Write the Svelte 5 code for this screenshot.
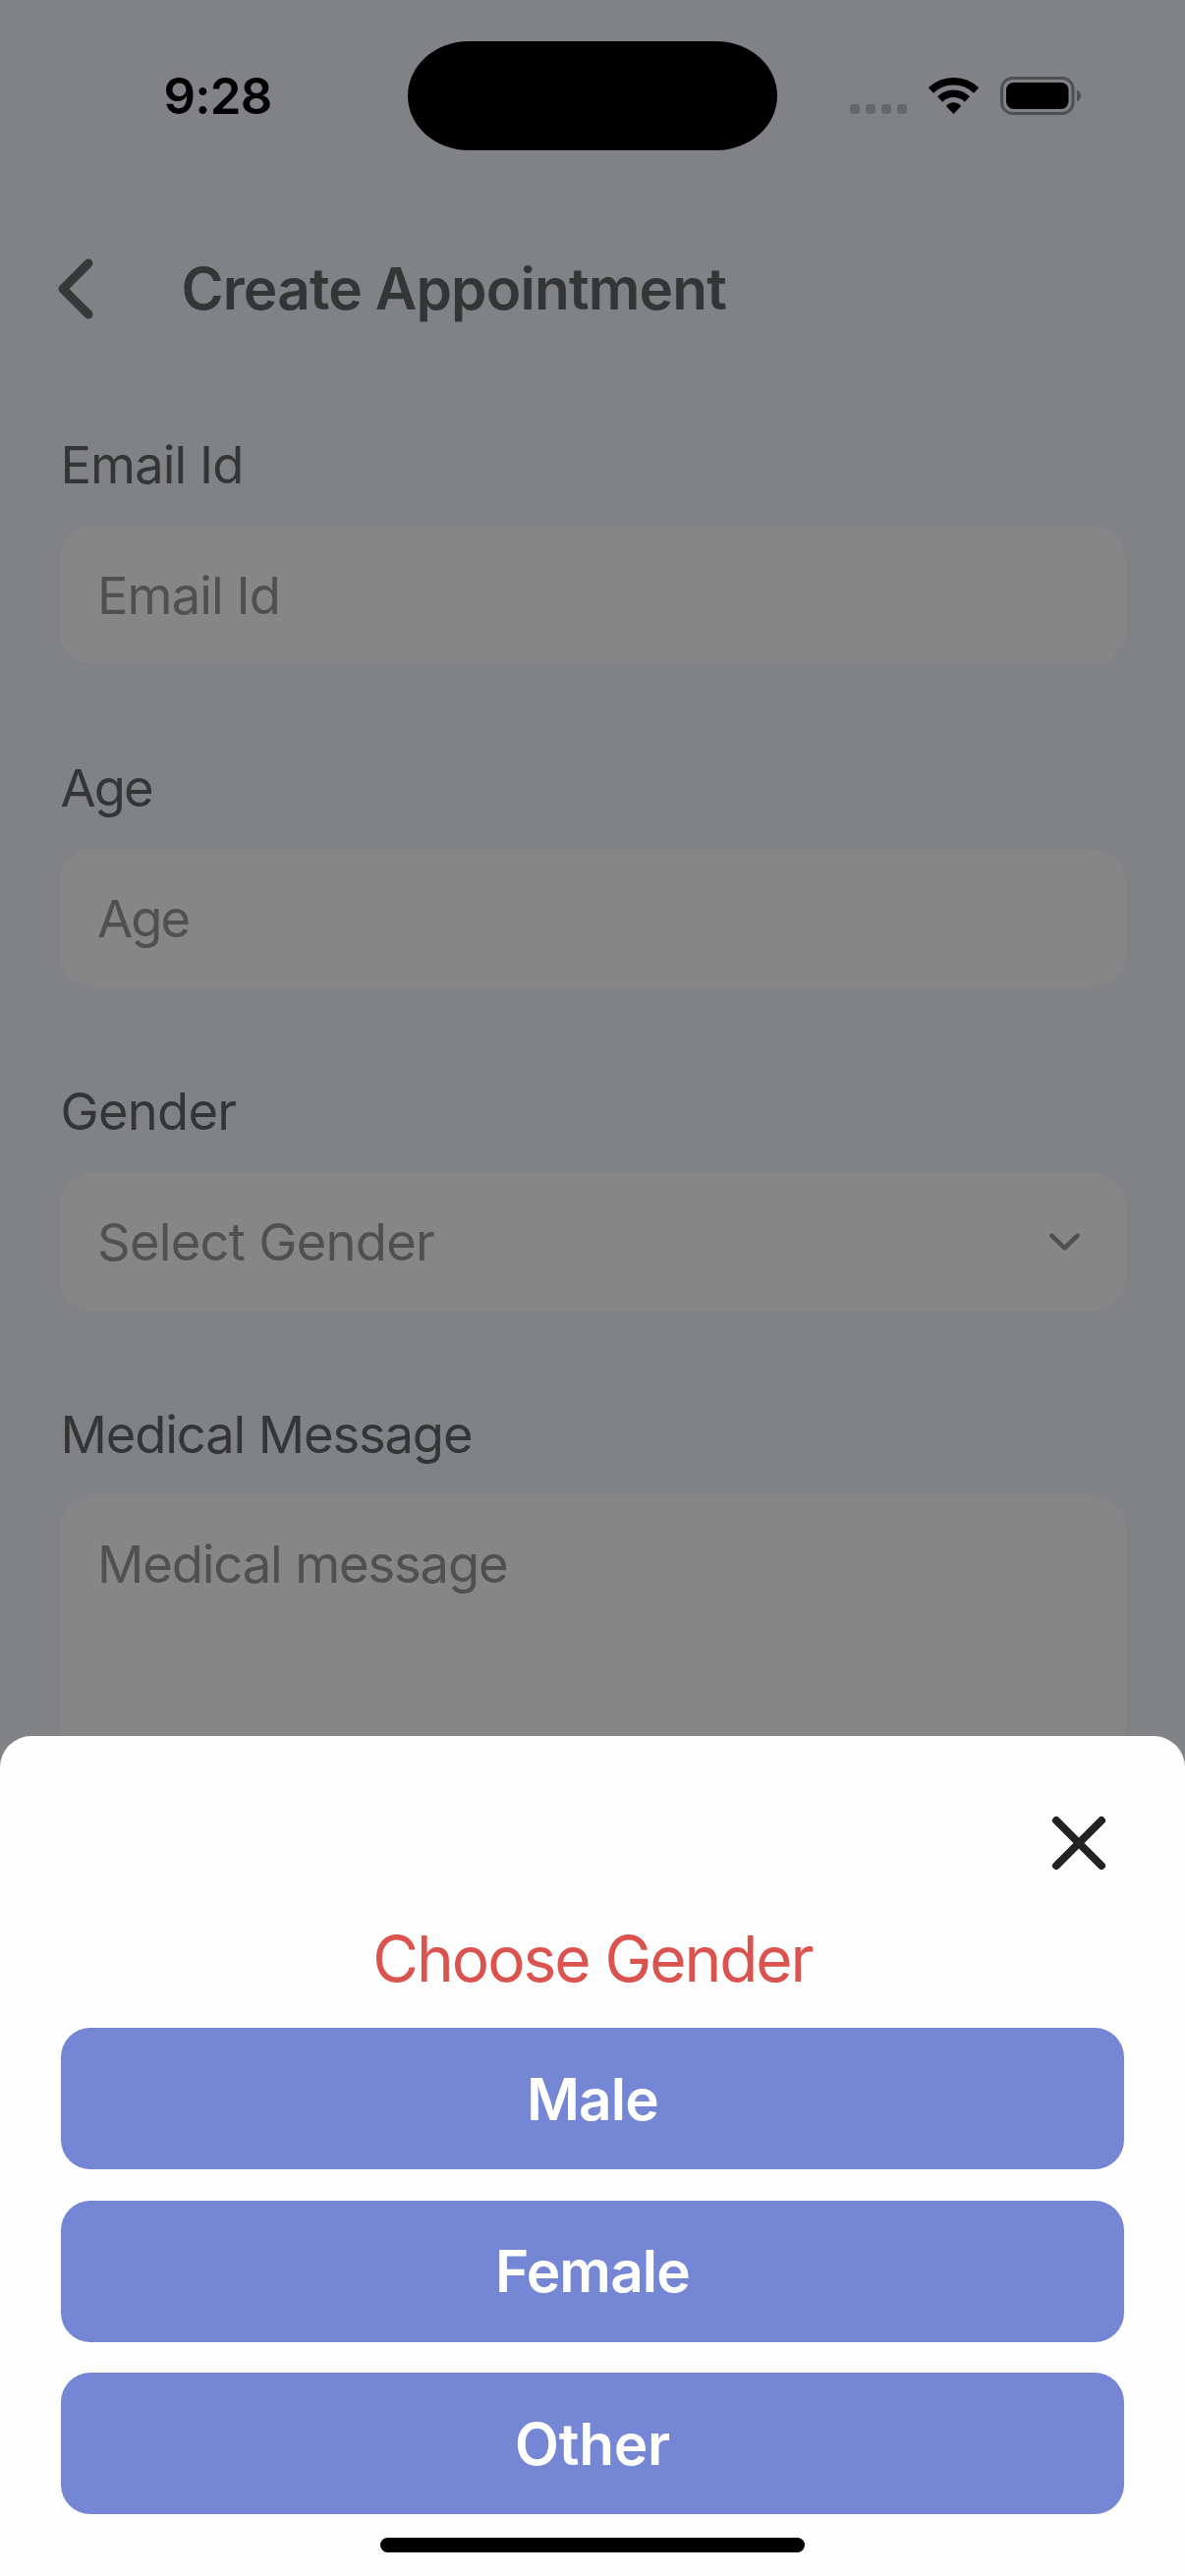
<script>
  const fields = [
    { label: 'Email Id', placeholder: 'Email Id', kind: 'input', key: 'email' },
    { label: 'Age', placeholder: 'Age', kind: 'input', key: 'age' },
    { label: 'Gender', placeholder: 'Select Gender', kind: 'select', key: 'gender' },
    { label: 'Medical Message', placeholder: 'Medical message', kind: 'area', key: 'message' }
  ];
  const options = ['Male', 'Female', 'Other'];
</script>

<div class="phone">
  <div class="status">
    <span class="time">9:28</span>
    <span class="island"></span>
    <svg class="indicators" viewBox="865 78 236 39" aria-hidden="true">
      <g fill="#66676a">
        <rect x="865" y="106" width="10" height="10" rx="3" />
        <rect x="881" y="106" width="10" height="10" rx="3" />
        <rect x="897" y="106" width="10" height="10" rx="3" />
        <rect x="913" y="106" width="10" height="10" rx="3" />
      </g>
      <g fill="none" stroke="#000" stroke-width="7.4">
        <path d="M947.4 92A33.3 33.3 0 0 1 993.6 92" />
        <path d="M956.6 101A19.8 19.8 0 0 1 984.4 101" />
      </g>
      <path d="M970.5 116L963 108.2Q963.2 107 964.4 106.2A11 11 0 0 1 976.6 106.2Q977.8 107 978 108.2Z" />
      <rect x="1019.5" y="79.5" width="72.5" height="36" rx="11" fill="none" stroke="#4f5052" stroke-width="3" />
      <rect x="1024" y="84" width="63.5" height="27" rx="7.5" />
      <path d="M1096 91.5Q1100 93.500 1100 97.500Q1100 101.500 1096 103.500Z" fill="#4f5052" />
    </svg>
  </div>

  <header class="header">
    <svg class="back" viewBox="0 0 36 62" aria-hidden="true">
      <path d="M31 5L5 31L31 57" />
    </svg>
    <h1>Create Appointment</h1>
  </header>

  <main class="form">
    {#each fields as f}
      <section class="group">
        <span class="label {f.key}">{f.label}</span>
        <div class="field {f.kind}">
          <span class="hint {f.key}">{f.placeholder}</span>
          {#if f.kind === 'select'}
            <svg class="caret" viewBox="0 0 32 18" aria-hidden="true">
              <path d="M2.500 2.500L16 15.500L29.500 2.500" />
            </svg>
          {/if}
        </div>
      </section>
    {/each}
  </main>

  <div class="sheet">
    <svg class="close" viewBox="0 0 56 56" aria-hidden="true">
      <path d="M5 5L51 51M51 5L5 51" />
    </svg>
    <h2>Choose Gender</h2>
    <div class="options">
      {#each options as o}
        <button class="option">{o}</button>
      {/each}
    </div>
    <span class="home"></span>
  </div>
</div>

<style>
  :global(body) {
    margin: 0;
    background: #818286;
  }
  .phone {
    position: relative;
    width: 1206px;
    height: 2622px;
    overflow: hidden;
    background: #818286;
    font-family: Inter, 'Liberation Sans', sans-serif;
    color: #343535;
  }
  .status {
    display: grid;
    grid-template-columns: 415px 376px 74px 236px;
    align-items: center;
    height: 195px;
  }
  .time {
    padding-left: 166.5px;
    font-size: 51px;
    line-height: 60px;
    font-weight: 600;
    letter-spacing: -0.8px;
    color: #000;
  }
  .island {
    height: 111px;
    margin-bottom: 1px;
    border-radius: 62px / 55.5px;
    background: #000;
  }
  .indicators {
    grid-column: 4;
    width: 236px;
    height: 39px;
  }
  .header {
    display: flex;
    align-items: center;
    height: 198px;
    padding-left: 58.5px;
  }
  .back {
    width: 36px;
    height: 62px;
    margin-right: 90px;
    fill: none;
    stroke: #373838;
    stroke-width: 9;
    stroke-linecap: round;
    stroke-linejoin: round;
  }
  h1 {
    margin: 0;
    font-size: 58.5px;
    line-height: 70px;
    font-weight: 600;
    letter-spacing: -0.85px;
  }
  .form {
    display: flex;
    flex-direction: column;
    gap: 94px;
    padding: 48px 61px 0;
  }
  .group {
    display: flex;
    flex-direction: column;
    gap: 31px;
  }
  .label,
  .hint {
    font-size: 52.5px;
    line-height: 64px;
    white-space: nowrap;
  }
  .label {
    align-self: flex-start;
    padding-left: 0.5px;
  }
  .email {
    letter-spacing: -0.95px;
  }
  .age {
    letter-spacing: -1.9px;
  }
  .gender {
    letter-spacing: -0.75px;
  }
  .message {
    letter-spacing: -1.15px;
  }
  .field {
    display: flex;
    align-items: center;
    justify-content: space-between;
    box-sizing: border-box;
    height: 140px;
    padding: 0 46px 1px 38px;
    border-radius: 32px;
    background: #868686;
    color: #515051;
  }
  .area {
    align-items: flex-start;
    height: 440px;
    padding-top: 37px;
  }
  .caret {
    width: 31px;
    height: 18px;
    fill: none;
    stroke: #4e4e4e;
    stroke-width: 4.6;
    stroke-linecap: round;
    stroke-linejoin: round;
  }
  .sheet {
    position: absolute;
    left: 0;
    right: 0;
    bottom: 0;
    display: flex;
    flex-direction: column;
    align-items: center;
    box-sizing: border-box;
    height: 855px;
    padding: 81px 62px 0;
    border-radius: 32px 32px 0 0;
    background: #fefefe;
  }
  .close {
    align-self: flex-end;
    width: 56px;
    height: 56px;
    margin-right: 18.5px;
    fill: none;
    stroke: #222;
    stroke-width: 8;
    stroke-linecap: round;
  }
  h2 {
    margin: 50px 0 30px;
    font-size: 64px;
    line-height: 80px;
    font-weight: 400;
    letter-spacing: -2.05px;
    color: #da534f;
  }
  .options {
    display: flex;
    flex-direction: column;
    gap: 31.5px;
    width: 100%;
  }
  .option {
    height: 144px;
    padding: 1px 0 0;
    border: 0;
    border-radius: 30px;
    background: #7587d4;
    font-family: inherit;
    font-size: 58.5px;
    line-height: 70px;
    font-weight: 600;
    letter-spacing: -0.9px;
    color: #fff;
  }
  .option:last-child {
    letter-spacing: -0.3px;
  }
  .home {
    width: 432px;
    height: 15px;
    margin-top: 24px;
    border-radius: 8px;
    background: #000;
  }
</style>
